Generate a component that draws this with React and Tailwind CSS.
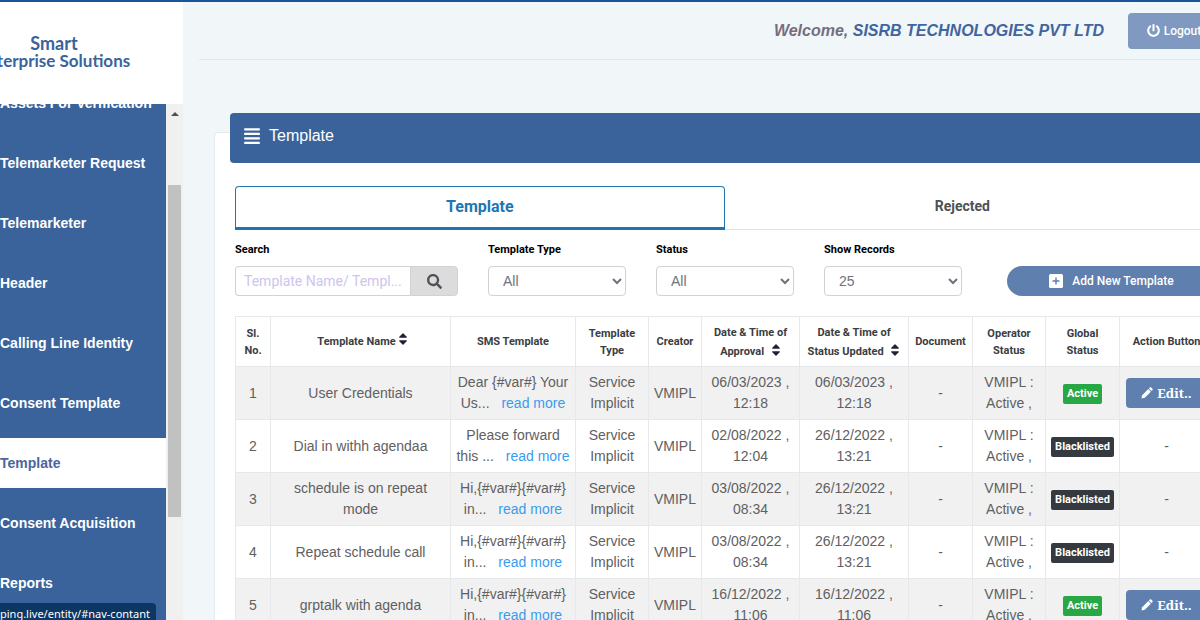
import React, { useState } from 'react';
import clsx from 'clsx';
import { FaAlignJustify, FaPowerOff, FaSearch } from 'react-icons/fa';

const menuItems = [
  'Assets For Verification',
  'Telemarketer Request',
  'Telemarketer',
  'Header',
  'Calling Line Identity',
  'Consent Template',
  'Template',
  'Consent Acquisition',
  'Reports',
];

const templates = [
  { name: 'User Credentials', sms: 'Dear {#var#} Your Us...', approved: '06/03/2023 , 12:18', updated: '06/03/2023 , 12:18', status: 'Active' },
  { name: 'Dial in withh agendaa', sms: 'Please forward this ...', approved: '02/08/2022 , 12:04', updated: '26/12/2022 , 13:21', status: 'Blacklisted' },
  { name: 'schedule is on repeat mode', sms: 'Hi,{#var#}{#var#} in...', approved: '03/08/2022 , 08:34', updated: '26/12/2022 , 13:21', status: 'Blacklisted' },
  { name: 'Repeat schedule call', sms: 'Hi,{#var#}{#var#} in...', approved: '03/08/2022 , 08:34', updated: '26/12/2022 , 13:21', status: 'Blacklisted' },
  { name: 'grptalk with agenda', sms: 'Hi,{#var#}{#var#} in...', approved: '16/12/2022 , 11:06', updated: '16/12/2022 , 11:06', status: 'Active' },
];

const SortIcon = ({ className }) => (
  <svg viewBox="0 0 10 12" className={clsx('inline-block h-3 w-[10px] fill-[#212038]', className)} aria-hidden="true">
    <path d="M4.5.5a.7.7 0 0 1 1 0l3.2 3.3c.5.5.2 1-.4 1H1.7c-.6 0-.9-.5-.4-1z" />
    <path d="M4.5 11.5a.7.7 0 0 0 1 0l3.2-3.3c.5-.5.2-1-.4-1H1.7c-.6 0-.9.5-.4 1z" />
  </svg>
);

const PlusIcon = () => (
  <svg viewBox="0 0 14 14" className="h-[14px] w-[14px]" aria-hidden="true">
    <rect width="14" height="14" rx="1.5" fill="#fff" />
    <path d="M7 3.5v7M3.5 7h7" stroke="#5f7fae" strokeWidth="1.4" />
  </svg>
);

const PencilIcon = () => (
  <svg viewBox="0 0 12 12" className="h-3 w-3 fill-white" aria-hidden="true">
    <path d="M7.3 2.1l2.6 2.6-6.1 6.1L.4 11.6l.8-3.4z" />
    <path d="M7.9 1.5l.9-.9c.4-.4 1-.4 1.4 0l1.2 1.2c.4.4.4 1 0 1.4l-.9.9z" />
  </svg>
);

const Sidebar = () => (
  <aside className="flex w-[183px] shrink-0 flex-col bg-white">
    <a href="#home" className="flex h-[102px] w-[108px] shrink-0 flex-col items-center pt-8 font-['Lato',sans-serif] text-lg leading-[18px] font-bold whitespace-nowrap text-[#3a639b]">
      <span>Smart</span>
      <span className="text-[17px]">Enterprise Solutions</span>
    </a>
    <div className="flex min-h-0 flex-1">
      <nav className="min-w-0 flex-1 overflow-hidden bg-[#3a639b]">
        <ul className="-mt-[26px] flex flex-col gap-[10px]">
          {menuItems.map((item) => (
            <li key={item}>
              <a
                href="#nav-contant"
                className={clsx(
                  'flex h-[50px] items-center text-sm font-bold whitespace-nowrap',
                  item === 'Template' ? 'bg-white text-[#4a66a0]' : 'text-white'
                )}
              >
                {item}
              </a>
            </li>
          ))}
        </ul>
      </nav>
      {/* scroll track */}
      <div className="flex w-[17px] flex-col items-center bg-[#f0f0f0]">
        <svg viewBox="0 0 8 4" className="mt-2 h-1 w-2 fill-[#505050]" aria-hidden="true">
          <path d="M4 0l4 4H0z" />
        </svg>
        <div className="mt-[69px] h-[332px] w-[13px] bg-[#c1c1c1]" />
      </div>
    </div>
  </aside>
);

const FilterSelect = ({ id, label, options }) => (
  <div className="w-[138px] shrink-0">
    <label htmlFor={id} className="block font-['Roboto',sans-serif] text-[11px] leading-4 font-bold text-black">{label}</label>
    <select id={id} className="mt-2 h-[30px] w-full rounded border border-[#cfd2d6] bg-white pl-[10px] text-sm text-[#6c757d]">
      {options.map((option) => (
        <option key={option}>{option}</option>
      ))}
    </select>
  </div>
);

const StatusBadge = ({ status }) => (
  <span
    className={clsx(
      "inline-block rounded-xs px-1 text-[11px] leading-5 font-bold text-white font-['Roboto',sans-serif]",
      status === 'Active' ? 'bg-[#28a745]' : 'bg-[#343a40]'
    )}
  >
    {status}
  </span>
);

const TemplateTable = () => (
  <table className="mt-5 w-full min-w-[979px] table-fixed border-collapse text-center [&_td]:border [&_td]:border-[#e6e8ea] [&_th]:border [&_th]:border-[#e6e8ea]">
    <colgroup>
      <col className="w-[35px]" />
      <col className="w-[180px]" />
      <col className="w-[125px]" />
      <col className="w-[73px]" />
      <col className="w-[53px]" />
      <col className="w-[98px]" />
      <col className="w-[109px]" />
      <col className="w-[64px]" />
      <col className="w-[73px]" />
      <col className="w-[74px]" />
      <col />
    </colgroup>
    <thead className="font-['Roboto',sans-serif] text-[11px] leading-[17px] text-[#3a3d42]">
      <tr className="h-[50px]">
        <th>Sl.<br />No.</th>
        <th>
          <div className="flex items-start justify-center gap-[2px] pl-1">
            Template Name
            <SortIcon />
          </div>
        </th>
        <th>SMS Template</th>
        <th>Template<br />Type</th>
        <th>Creator</th>
        <th className="leading-[19px]">Date &amp; Time of<br />Approval <SortIcon className="mb-1 ml-1" /></th>
        <th className="leading-[19px] whitespace-nowrap">Date &amp; Time of<br />Status Updated <SortIcon className="mb-1 ml-1" /></th>
        <th>Document</th>
        <th>Operator<br />Status</th>
        <th>Global<br />Status</th>
        <th className="whitespace-nowrap">Action Button</th>
      </tr>
    </thead>
    <tbody className="text-sm leading-[21px] text-[#5f6062]">
      {templates.map((row, index) => (
        <tr key={row.name} className="h-[53px] odd:bg-[#f1f1f1]">
          <td>{index + 1}</td>
          <td className="px-5">{row.name}</td>
          <td className="px-1">
            {row.sms} <a href="#read-more" className="ml-2 whitespace-nowrap text-[#3a9bee]">read more</a>
          </td>
          <td>Service Implicit</td>
          <td>VMIPL</td>
          <td className="px-2">{row.approved}</td>
          <td className="px-3">{row.updated}</td>
          <td>-</td>
          <td className="px-2">VMIPL : Active ,</td>
          <td><StatusBadge status={row.status} /></td>
          <td>
            {row.status === 'Active' ? (
              <button type="button" className="inline-flex h-[30px] w-[82px] items-center justify-center gap-1 rounded bg-[#5f7fae] font-['Noto_Serif','Liberation_Serif',serif] text-[13px] font-bold text-white">
                <PencilIcon />
                Edit..
              </button>
            ) : (
              '-'
            )}
          </td>
        </tr>
      ))}
    </tbody>
  </table>
);

const App = () => {
  const [activeTab, setActiveTab] = useState('Template');
  const [search, setSearch] = useState('');

  return (
    <div className="flex h-screen flex-col overflow-hidden border-t-2 border-[#1c549c] bg-[#f1f6f9] font-['Liberation_Sans',Arial,sans-serif]">
      <div className="flex min-h-0 flex-1">
        <Sidebar />

        <main className="min-w-0 flex-1 pl-4">
          <header className="flex h-[58px] items-center justify-end gap-6 border-b border-[#e3e7eb]">
            <p className="text-base font-bold whitespace-nowrap text-[#766e80] italic">
              Welcome, <span className="text-[#41659f]">SISRB TECHNOLOGIES PVT LTD</span>
            </p>
            <button type="button" className="-mr-5 flex h-9 w-[92px] shrink-0 items-center justify-center gap-1 rounded bg-[#7f99c0] font-['Roboto',sans-serif] text-xs font-medium text-white">
              <FaPowerOff className="h-[13px] w-[13px]" />
              Logout
            </button>
          </header>

          <section className="mt-[72px] ml-[15px] h-full rounded-tl border border-r-0 border-[#e1e9f3] bg-white pl-[15px]">
            <div className="-mt-5 flex h-[50px] items-center gap-2 rounded-l-sm bg-[#3a639b] pb-1 pl-[13px] text-white">
              <FaAlignJustify className="h-[18px] w-[18px]" />
              <h1 className="text-base">Template</h1>
            </div>

            <div className="mt-[23px] pl-[5px]">
              <div className="flex h-11 border-b border-[#dee2e6]" role="tablist">
                {['Template', 'Rejected'].map((tab) => (
                  <button
                    key={tab}
                    type="button"
                    role="tab"
                    aria-selected={activeTab === tab}
                    onClick={() => setActiveTab(tab)}
                    className={clsx(
                      "h-11 flex-auto font-['Roboto',sans-serif]",
                      activeTab === tab
                        ? 'rounded-t border border-b-[3px] border-[#1b78ae] text-base font-bold text-[#1b78b4]'
                        : 'pb-[5px] text-sm font-bold text-[#4e5256]'
                    )}
                  >
                    {tab}
                  </button>
                ))}
              </div>

              <div className="mt-3 flex items-end gap-[30px]">
                <div className="w-[223px] shrink-0">
                  <label htmlFor="search" className="block font-['Roboto',sans-serif] text-[11px] leading-4 font-bold text-black">Search</label>
                  <div className="mt-2 flex h-[30px]">
                    <input
                      id="search"
                      type="text"
                      value={search}
                      onChange={(e) => setSearch(e.target.value)}
                      placeholder="Template Name/ Templ..."
                      className="min-w-0 flex-1 rounded-l border border-r-0 border-[#cfd2d6] px-2 font-['Roboto',sans-serif] text-sm text-[#495057] placeholder:text-[#cfc3ee]"
                    />
                    <button type="button" aria-label="Search" className="flex w-12 items-center justify-center rounded-r border border-[#cfd2d6] bg-[#dcdcdc] text-[#505458]">
                      <FaSearch className="h-[15px] w-[15px]" />
                    </button>
                  </div>
                </div>
                <FilterSelect id="template-type" label="Template Type" options={['All', 'Service Implicit', 'Service Explicit']} />
                <FilterSelect id="status" label="Status" options={['All', 'Active', 'Blacklisted']} />
                <FilterSelect id="show-records" label="Show Records" options={['25', '50', '100']} />
                <button type="button" className="ml-[15px] flex h-[30px] w-[209px] shrink-0 items-center justify-center gap-[9px] rounded-full bg-[#5f7fae] font-['Roboto',sans-serif] text-xs font-medium text-white">
                  <PlusIcon />
                  Add New Template
                </button>
              </div>

              <TemplateTable />
            </div>
          </section>
        </main>
      </div>

      {/* link preview over the bottom left corner */}
      <div className="absolute bottom-0 left-0 h-[17px] rounded-tr bg-[#0c3663] pr-[6px] font-['Noto_Sans',sans-serif] text-[11px] leading-[22px] whitespace-nowrap text-white">
        ping.live/entity/#nav-contant
      </div>
    </div>
  );
};

export default App;
